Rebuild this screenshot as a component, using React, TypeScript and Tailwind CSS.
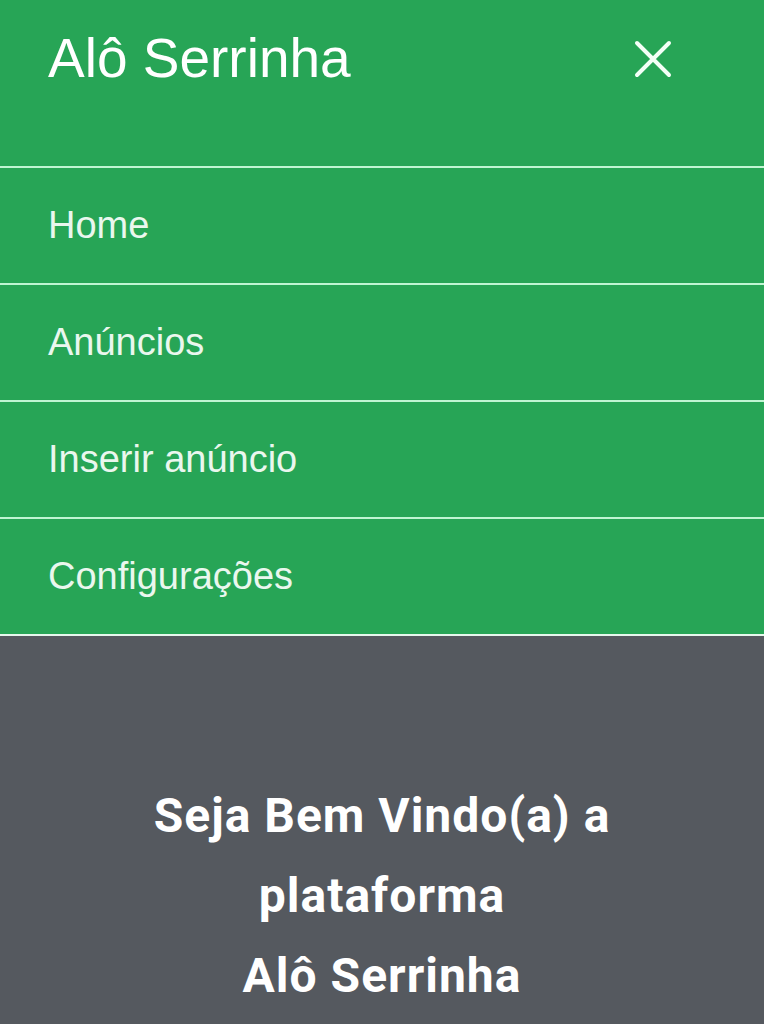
export default function App() {
  const items = ["Home", "Anúncios", "Inserir anúncio", "Configurações"];
  return (
    <div className="w-[764px] h-[1024px] overflow-hidden bg-[#55595f]" style={{ fontFamily: '"Liberation Sans", Arial, sans-serif' }}>
      <div className="bg-[#27a556]">
        <div className="h-[166px] flex items-start justify-between pl-[48px] pr-[92px] pt-[28px]">
          <span className="text-white text-[55px] leading-[60px]">Alô Serrinha</span>
          <svg width="38" height="38" viewBox="0 0 38 38" className="mt-[12px]">
            <path d="M3 3 L35 35 M35 3 L3 35" stroke="#f4fff7" strokeWidth="4" strokeLinecap="round" />
          </svg>
        </div>
        {items.map((t) => (
          <div key={t} className="border-t-2 border-[#bff5d2] h-[117px] flex items-center pl-[48px]">
            <span className="text-[#eaf7ee] text-[38px]">{t}</span>
          </div>
        ))}
        <div className="border-t-2 border-[#e6f7ec]" />
      </div>
      <div className="pt-[140px] text-center text-white font-bold text-[48px] leading-[80px] tracking-[1px]" style={{ fontFamily: 'Roboto, "Liberation Sans", sans-serif' }}>
        <div>Seja Bem Vindo(a) a</div>
        <div>plataforma</div>
        <div>Alô Serrinha</div>
      </div>
    </div>
  );
}
